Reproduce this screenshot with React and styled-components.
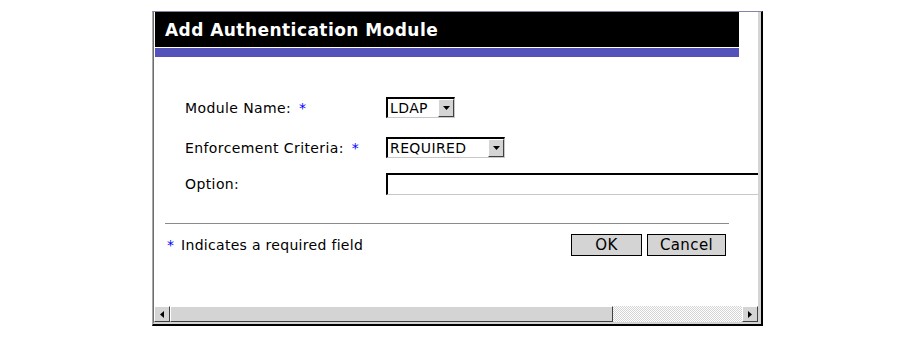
import styled, { createGlobalStyle } from 'styled-components';

const GlobalStyle = createGlobalStyle`
  html, body {
    margin: 0;
    padding: 0;
    background: #ffffff;
  }
  body {
    font-family: "DejaVu Sans", Verdana, sans-serif;
    color: #000000;
  }
`;

function DownArrow() {
  return (
    <svg width="7" height="4" viewBox="0 0 7 4">
      <path d="M0 0h7L3.5 4z" fill="#000" />
    </svg>
  );
}

function SideArrow({ dir }) {
  return (
    <svg width="4" height="7" viewBox="0 0 4 7">
      {dir === 'left' ? (
        <path d="M4 0v7L0 3.5z" fill="#000" />
      ) : (
        <path d="M0 0v7l4-3.5z" fill="#000" />
      )}
    </svg>
  );
}

function Select({ value, width }) {
  return (
    <SelectBox $width={width}>
      <SelectValue>{value}</SelectValue>
      <ArrowButton>
        <DownArrow />
      </ArrowButton>
    </SelectBox>
  );
}

export default function App() {
  return (
    <>
      <GlobalStyle />
      <Frame>
        <Inner>
          <Viewport>
            <Header>Add Authentication Module</Header>
            <Stripe />
            <Form>
              <FieldRow $top={0} $height={21}>
                <Label>
                  Module Name: <Star>*</Star>
                </Label>
                <Select value="LDAP" width={69} />
              </FieldRow>
              <FieldRow $top={19} $height={21}>
                <Label>
                  Enforcement Criteria: <Star>*</Star>
                </Label>
                <Select value="REQUIRED" width={119} />
              </FieldRow>
              <FieldRow $top={15} $height={22}>
                <Label>Option:</Label>
                <TextInput />
              </FieldRow>
            </Form>
            <Divider />
            <Footer>
              <Note>
                <Star>*</Star> Indicates a required field
              </Note>
              <Buttons>
                <Button $width={71}>OK</Button>
                <Button $width={79}>Cancel</Button>
              </Buttons>
            </Footer>
          </Viewport>
          <ScrollBar>
            <ScrollButton>
              <SideArrow dir="left" />
            </ScrollButton>
            <Thumb />
            <Track />
            <ScrollButton>
              <SideArrow dir="right" />
            </ScrollButton>
          </ScrollBar>
        </Inner>
      </Frame>
    </>
  );
}

const Frame = styled.div`
  box-sizing: border-box;
  margin: 11px 0 0 152px;
  width: 611px;
  height: 315px;
  border-top: 1px solid #8e7fa6;
  border-left: 1px solid #a8a8a8;
  border-right: 2px solid #000000;
  border-bottom: 2px solid #000000;
  display: flex;
`;

const Inner = styled.div`
  flex: 1;
  min-width: 0;
  display: flex;
  flex-direction: column;
  border-left: 1px solid #6e6e6e;
  border-right: 3px solid #d4d4d4;
  border-bottom: 2px solid #d4d4d4;
`;

const Viewport = styled.div`
  flex: 1;
  overflow: hidden;
  background: #ffffff;
`;

const Header = styled.div`
  box-sizing: border-box;
  width: 584px;
  height: 35px;
  margin-left: 1px;
  padding: 2px 0 0 10px;
  background: #000000;
  color: #ffffff;
  font-family: "DejaVu Sans", Verdana, sans-serif;
  font-weight: bold;
  font-size: 17px;
  letter-spacing: 0.45px;
  line-height: 33px;
  white-space: nowrap;
`;

const Stripe = styled.div`
  width: 584px;
  height: 9px;
  margin-left: 1px;
  border-top: 1px solid #ffffff;
  background: #5353bb;
`;

const Form = styled.div`
  padding: 40px 0 0 31px;
  display: flex;
  flex-direction: column;
`;

const FieldRow = styled.div`
  display: grid;
  grid-template-columns: 201px auto;
  align-items: center;
  margin-top: ${({ $top }) => $top}px;
  height: ${({ $height }) => $height}px;
`;

const Label = styled.div`
  font-size: 14px;
  letter-spacing: 0.4px;
  white-space: nowrap;
`;

const Star = styled.span`
  color: #0000ff;
  margin-left: 3px;
`;

const SelectBox = styled.div`
  box-sizing: border-box;
  width: ${({ $width }) => $width}px;
  height: 21px;
  display: flex;
  align-items: stretch;
  border-top: 2px solid #000000;
  border-left: 2px solid #000000;
  border-right: 1px solid #c8c8c8;
  border-bottom: 1px solid #c8c8c8;
  background: #ffffff;
`;

const SelectValue = styled.div`
  flex: 1;
  padding-left: 2px;
  font-size: 14px;
  letter-spacing: 0.4px;
  line-height: 18px;
  white-space: nowrap;
`;

const ArrowButton = styled.div`
  box-sizing: border-box;
  width: 16px;
  display: flex;
  align-items: center;
  justify-content: center;
  background: #d4d4d4;
  border-top: 1px solid #ffffff;
  border-left: 1px solid #ffffff;
  border-right: 1px solid #404040;
  border-bottom: 1px solid #404040;
`;

const TextInput = styled.div`
  box-sizing: border-box;
  width: 420px;
  height: 22px;
  border-top: 2px solid #000000;
  border-left: 2px solid #000000;
  border-bottom: 1px solid #c8c8c8;
  background: #ffffff;
`;

const Divider = styled.div`
  width: 564px;
  height: 1px;
  margin: 28px 0 0 11px;
  background: #8a8a8a;
`;

const Footer = styled.div`
  box-sizing: border-box;
  width: 564px;
  margin: 10px 0 0 11px;
  padding: 0 3px 0 2px;
  display: flex;
  align-items: center;
  justify-content: space-between;
`;

const Note = styled.div`
  font-size: 14px;
  letter-spacing: 0.3px;
  white-space: nowrap;

  ${Star} {
    margin: 0 2px 0 0;
  }
`;

const Buttons = styled.div`
  display: flex;
  gap: 5px;
`;

const Button = styled.div`
  box-sizing: border-box;
  width: ${({ $width }) => $width}px;
  height: 22px;
  border: 1px solid #000000;
  background: #d4d4d4;
  font-size: 15px;
  letter-spacing: 0.4px;
  line-height: 20px;
  text-align: center;
`;

const ScrollBar = styled.div`
  height: 16px;
  display: flex;
  background: #d4d4d4;
`;

const ScrollButton = styled.div`
  box-sizing: border-box;
  width: 16px;
  height: 16px;
  display: flex;
  align-items: center;
  justify-content: center;
  background: #d4d4d4;
  border-top: 1px solid #ffffff;
  border-left: 1px solid #ffffff;
  border-right: 1px solid #404040;
  border-bottom: 1px solid #404040;
`;

const Thumb = styled.div`
  box-sizing: border-box;
  width: 443px;
  height: 16px;
  background: #d4d4d4;
  border-top: 1px solid #ffffff;
  border-left: 1px solid #ffffff;
  border-right: 1px solid #404040;
  border-bottom: 1px solid #404040;
`;

const Track = styled.div`
  flex: 1;
  background-color: #ffffff;
  background-image: repeating-conic-gradient(#d4d4d4 0 25%, #ffffff 0 50%);
  background-size: 2px 2px;
`;
